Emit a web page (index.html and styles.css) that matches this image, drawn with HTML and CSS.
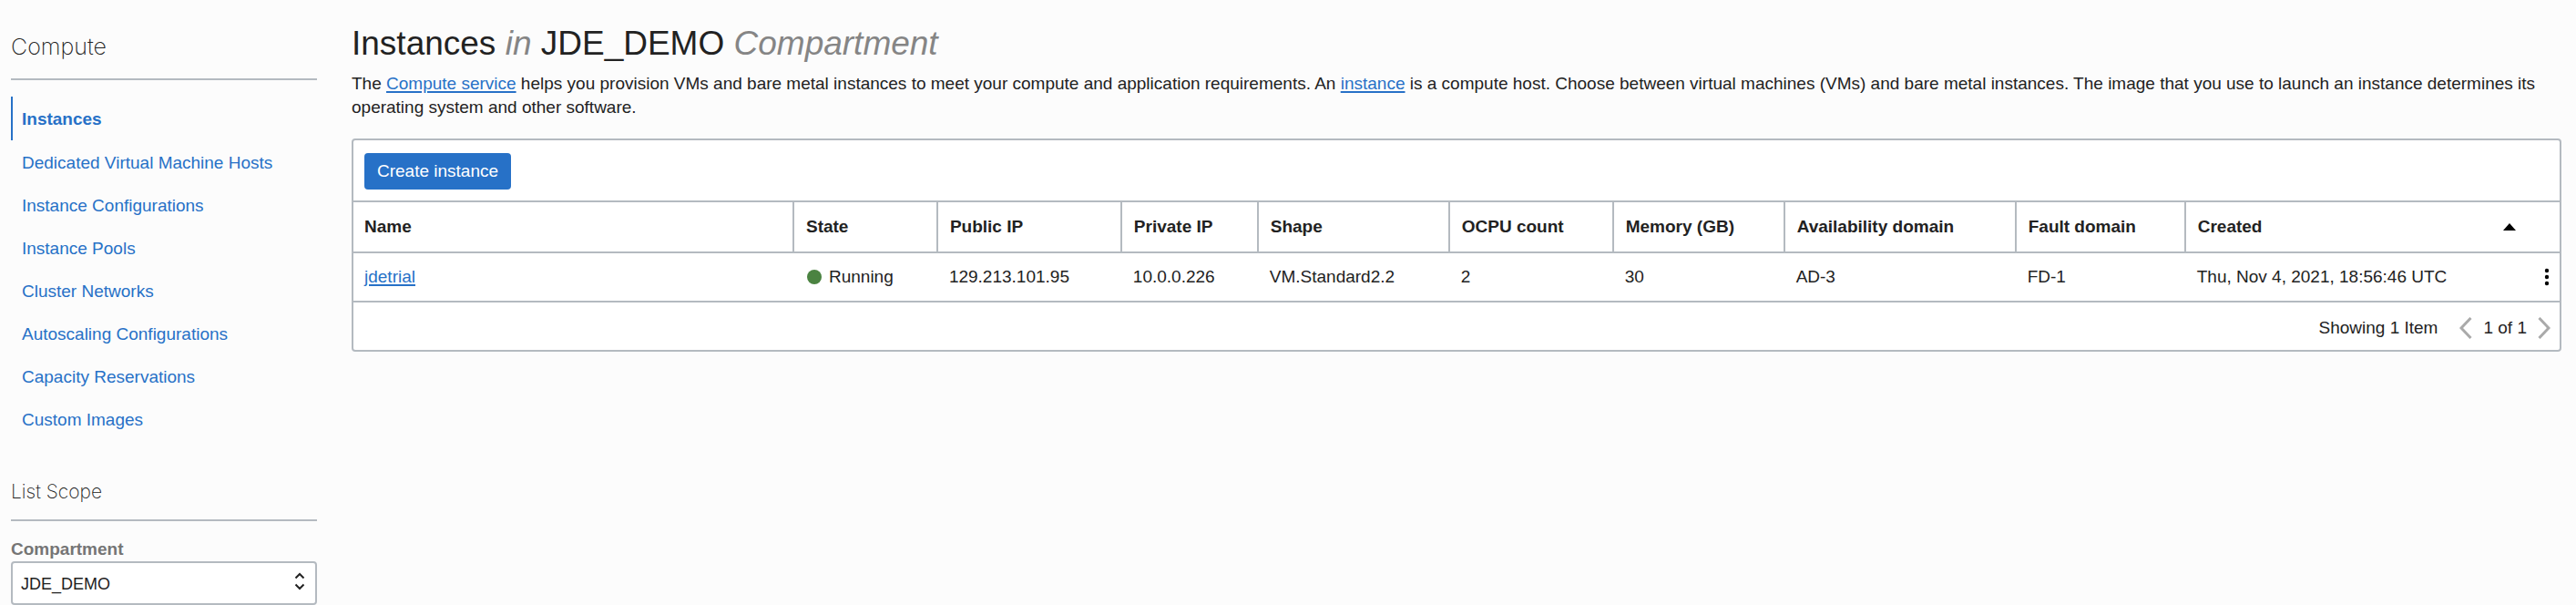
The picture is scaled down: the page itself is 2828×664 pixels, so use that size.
FILE: index.html
```html
<!DOCTYPE html>
<html lang="en">
<head>
<meta charset="utf-8">
<title>Instances</title>
<link rel="stylesheet" href="styles.css">
</head>
<body>
<div class="page">
  <aside class="sidebar">
    <h2 class="sidebar-title">Compute</h2>
    <nav aria-label="Compute">
      <ul class="nav">
        <li class="nav-item nav-item-active"><a href="#" aria-current="page">Instances</a></li>
        <li class="nav-item"><a href="#">Dedicated Virtual Machine Hosts</a></li>
        <li class="nav-item"><a href="#">Instance Configurations</a></li>
        <li class="nav-item"><a href="#">Instance Pools</a></li>
        <li class="nav-item"><a href="#">Cluster Networks</a></li>
        <li class="nav-item"><a href="#">Autoscaling Configurations</a></li>
        <li class="nav-item"><a href="#">Capacity Reservations</a></li>
        <li class="nav-item"><a href="#">Custom Images</a></li>
      </ul>
    </nav>
    <h3 class="scope-title">List Scope</h3>
    <label class="scope-label" for="compartment">Compartment</label>
    <div class="select-wrap">
      <select class="select" id="compartment"><option>JDE_DEMO</option></select>
      <svg class="select-icon" width="12" height="20" viewBox="0 0 12 20" aria-hidden="true"><path d="M1.5 6.5 6 2l4.500 4.500M1.500 13.500 6 18l4.500-4.500"/></svg>
    </div>
  </aside>
  <main class="main">
    <h1 class="title">Instances <em>in</em> JDE_DEMO <em>Compartment</em></h1>
    <p class="intro">The <a class="link" href="#">Compute service</a> helps you provision VMs and bare metal instances to meet your compute and application requirements. An <a class="link" href="#">instance</a> is a compute host. Choose between virtual machines (VMs) and bare metal instances. The image that you use to launch an instance determines its operating system and other software.</p>
    <section class="panel">
      <div class="toolbar"><button class="button" type="button">Create instance</button></div>
      <table class="table">
        <colgroup>
          <col class="col-name"><col class="col-state"><col class="col-public"><col class="col-private"><col class="col-shape"><col class="col-ocpu"><col class="col-memory"><col class="col-ad"><col class="col-fd"><col class="col-created"><col class="col-actions">
        </colgroup>
        <thead>
          <tr>
            <th scope="col">Name</th>
            <th scope="col">State</th>
            <th scope="col">Public IP</th>
            <th scope="col">Private IP</th>
            <th scope="col">Shape</th>
            <th scope="col">OCPU count</th>
            <th scope="col">Memory (GB)</th>
            <th scope="col">Availability domain</th>
            <th scope="col">Fault domain</th>
            <th scope="col" colspan="2" aria-sort="ascending"><div class="sorted">Created <svg width="14" height="8" viewBox="0 0 14 8" aria-hidden="true"><path d="M0 8 7 0l7 8z"/></svg></div></th>
          </tr>
        </thead>
        <tbody>
          <tr>
            <td><a class="link" href="#">jdetrial</a></td>
            <td><div class="state"><span class="dot"></span>Running</div></td>
            <td>129.213.101.95</td>
            <td>10.0.0.226</td>
            <td>VM.Standard2.2</td>
            <td>2</td>
            <td>30</td>
            <td>AD-3</td>
            <td>FD-1</td>
            <td>Thu, Nov 4, 2021, 18:56:46 UTC</td>
            <td class="actions"><button class="icon-button" type="button" aria-label="Actions"><svg width="6" height="20" viewBox="0 0 6 20" aria-hidden="true"><circle cx="3" cy="3" r="2.200"/><circle cx="3" cy="10" r="2.200"/><circle cx="3" cy="17" r="2.200"/></svg></button></td>
          </tr>
        </tbody>
      </table>
      <div class="footer">
        <span>Showing 1 Item</span>
        <div class="pager">
          <button class="icon-button" type="button" aria-label="Previous page"><svg class="chevron" width="14" height="24" viewBox="0 0 14 24" aria-hidden="true"><path d="M12.500 1 2 12l10.500 11"/></svg></button>
          <span>1 of 1</span>
          <button class="icon-button" type="button" aria-label="Next page"><svg class="chevron" width="14" height="24" viewBox="0 0 14 24" aria-hidden="true"><path d="M1.500 1 12 12 1.500 23"/></svg></button>
        </div>
      </div>
    </section>
  </main>
</div>
</body>
</html>
```
FILE: styles.css
```css
* { box-sizing: border-box; }

body {
  margin: 0;
  background: #fcfcfc;
  color: #222;
  font: 19px/26px "Liberation Sans", Arial, sans-serif;
}

a { color: #2771c7; text-decoration: none; }

.page {
  display: grid;
  grid-template-columns: 336px minmax(0, 1fr);
  gap: 38px;
  padding: 0 16px 0 12px;
}

.sidebar-title,
.scope-title {
  margin: 0;
  border-bottom: 2px solid #b4bac0;
  font-family: Inter, "Liberation Sans", sans-serif;
  font-weight: 200;
}

.sidebar-title {
  margin-bottom: 18px;
  padding: 35px 0 19px;
  font-size: 25px;
  line-height: 32px;
}

.scope-title {
  margin-top: 41px;
  padding-bottom: 14px;
  font-size: 21px;
  line-height: 32px;
}

.nav { margin: 0; padding: 0; list-style: none; }

.nav-item {
  height: 47px;
  padding: 12px 0 0 12px;
  border-left: 0 solid #2771c7;
}

.nav-item-active {
  height: 48px;
  padding-left: 10px;
  border-left-width: 2px;
  font-weight: bold;
}

.scope-label {
  display: block;
  margin-top: 18px;
  color: #757575;
  font-weight: bold;
}

.select-wrap { position: relative; }

.select {
  display: block;
  width: 100%;
  height: 48px;
  padding: 2px 40px 0 9px;
  border: 2px solid #b4bac0;
  border-radius: 4px;
  background: #fff;
  color: #222;
  font: inherit;
  font-size: 18px;
  appearance: none;
}

.select-icon {
  position: absolute;
  top: 12px;
  right: 13px;
  fill: none;
  stroke: #222;
  stroke-width: 2;
  pointer-events: none;
}

.main { padding-top: 25px; }

.title {
  margin: 0;
  font-size: 37px;
  line-height: 46px;
  font-weight: normal;
}

.title em { color: #858585; }

.intro { margin: 8px 0 21px; }

.link {
  text-decoration: underline;
  text-decoration-thickness: 2px;
  text-underline-offset: 2px;
}

.panel {
  border: 2px solid #b4bac0;
  border-radius: 4px;
  background: #fff;
}

.toolbar { padding: 14px 12px 12px; }

.button {
  display: block;
  height: 40px;
  padding: 0 14px;
  border: 0;
  border-radius: 4px;
  background: #2771c7;
  color: #fff;
  font: inherit;
}

.table {
  width: 100%;
  table-layout: fixed;
  border-spacing: 0;
  border-bottom: 2px solid #b4bac0;
}

.col-name { width: 19.9%; }
.col-state { width: 6.52%; }
.col-public { width: 8.34%; }
.col-private { width: 6.19%; }
.col-shape { width: 8.67%; }
.col-ocpu { width: 7.43%; }
.col-memory { width: 7.76%; }
.col-ad { width: 10.49%; }
.col-fd { width: 7.68%; }
.col-actions { width: 40px; }

.table th,
.table td {
  padding: 0 0 0 14px;
  text-align: left;
  white-space: nowrap;
}

.table th {
  height: 58px;
  padding-left: 13px;
  border: solid #b4bac0;
  border-width: 2px 0 2px 2px;
}

.table td { height: 52px; }

.table th:first-child,
.table td:first-child { padding-left: 12px; border-left: 0; }

.sorted {
  display: flex;
  align-items: center;
  justify-content: space-between;
  padding-right: 48px;
}

.state { display: flex; align-items: center; gap: 8px; padding-left: 2px; }

.dot {
  width: 16px;
  height: 16px;
  border-radius: 50%;
  background: #4b8341;
}

.icon-button {
  display: flex;
  padding: 0;
  border: 0;
  background: none;
}

.table .actions { padding: 0 11px 0 0; }
.actions .icon-button { margin-left: auto; }

.chevron { fill: none; stroke: #aaa; stroke-width: 3; }

.footer {
  display: flex;
  align-items: center;
  justify-content: flex-end;
  gap: 24px;
  height: 52px;
  padding: 4px 10px 0 0;
}

.pager { display: flex; align-items: center; gap: 12px; }
```
